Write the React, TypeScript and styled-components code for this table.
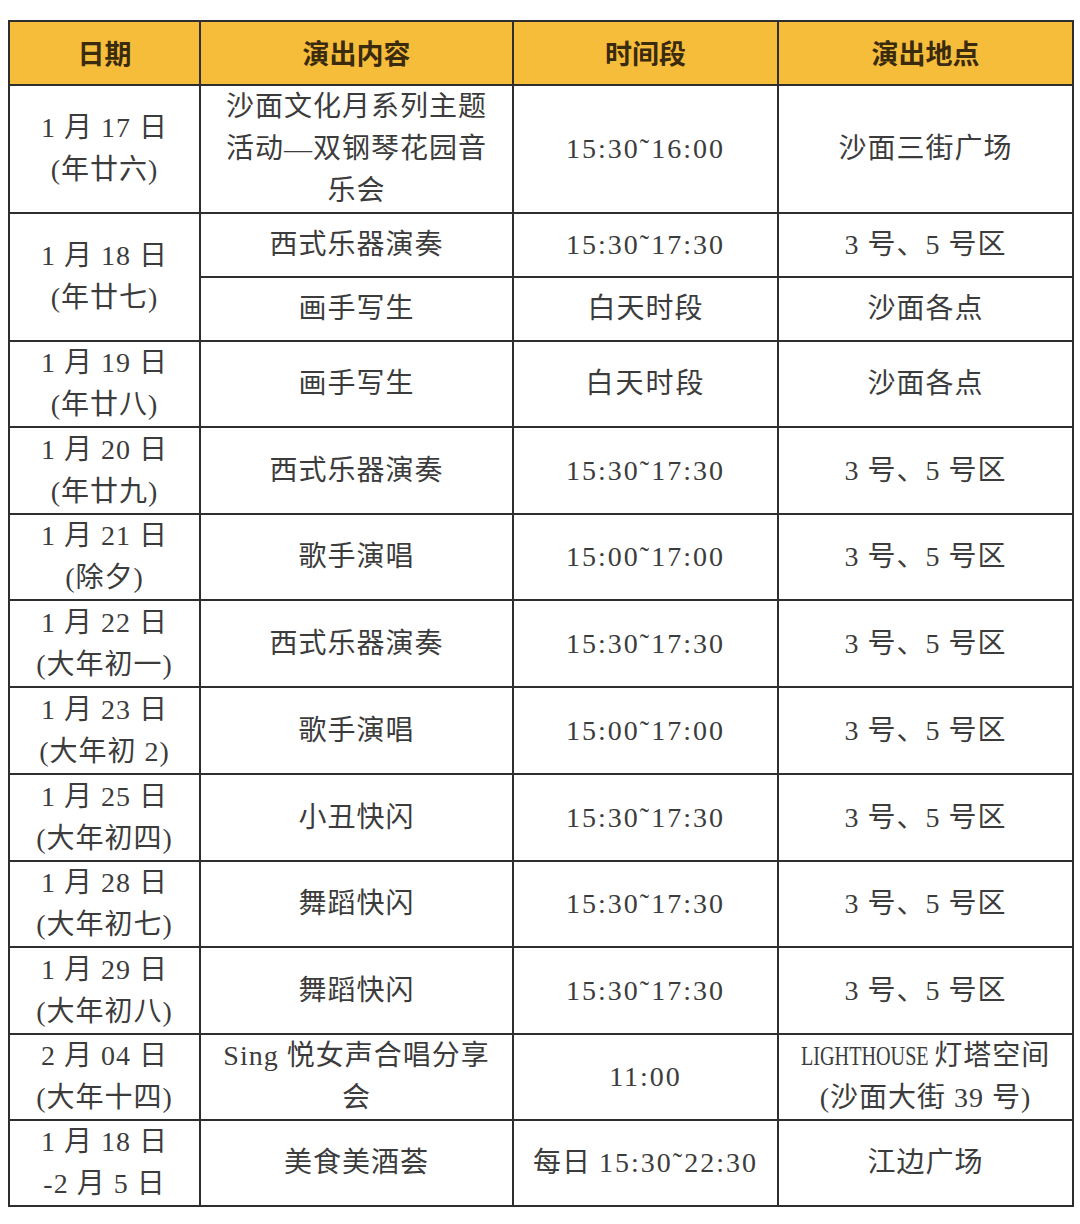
import React from 'react';
import styled, { createGlobalStyle } from 'styled-components';

const BORDER = '2px solid #2e2e2e';

const GlobalStyle = createGlobalStyle`
	html,
	body {
		margin: 0;
		padding: 0;
		background: #ffffff;
	}
	body {
		font-family: 'Liberation Serif', 'Noto Sans CJK SC', serif;
	}
`;

const Page = styled.div`
	width: 1080px;
	height: 1224px;
	padding: 20px 0 0 8px;
	box-sizing: border-box;
	background: #ffffff;
	overflow: hidden;
`;

const Table = styled.table`
	border-collapse: collapse;
	table-layout: fixed;
	width: 1064px;
	color: #3c3c3c;
	font-size: 28px;
`;

const HeadCell = styled.th`
	height: 62px;
	padding: 0;
	background: #f6bd3b;
	border: ${BORDER};
	color: #3a2a0e;
	font-family: 'Noto Sans CJK SC', sans-serif;
	font-weight: 700;
	font-size: 27px;
	line-height: 30px;
	text-align: center;
	vertical-align: middle;
`;

const Row = styled.tr<{ $h: number }>`
	height: ${p => p.$h}px;
`;

const Cell = styled.td`
	padding: 0;
	border: ${BORDER};
	text-align: center;
	vertical-align: middle;
	line-height: 42px;
	letter-spacing: 1px;
	font-weight: 400;
	white-space: nowrap;
	overflow: hidden;
`;

const Time = styled.span`
	letter-spacing: 2px;
`;

// the latin name is set in a narrow face in the source
const Narrow = styled.span`
	display: inline-block;
	transform: scaleX(0.72);
	transform-origin: left center;
	margin-right: -52px;
	letter-spacing: 0;
`;

type Entry = {
	date: [string, string];
	show: string;
	time: string;
	place: string;
	h: number;
};

const rows: Entry[] = [
	{ date: ['1 月 19 日', '(年廿八)'], show: '画手写生', time: '白天时段', place: '沙面各点', h: 86 },
	{ date: ['1 月 20 日', '(年廿九)'], show: '西式乐器演奏', time: '15:30˜17:30', place: '3 号、5 号区', h: 87 },
	{ date: ['1 月 21 日', '(除夕)'], show: '歌手演唱', time: '15:00˜17:00', place: '3 号、5 号区', h: 86 },
	{ date: ['1 月 22 日', '(大年初一)'], show: '西式乐器演奏', time: '15:30˜17:30', place: '3 号、5 号区', h: 87 },
	{ date: ['1 月 23 日', '(大年初 2)'], show: '歌手演唱', time: '15:00˜17:00', place: '3 号、5 号区', h: 87 },
	{ date: ['1 月 25 日', '(大年初四)'], show: '小丑快闪', time: '15:30˜17:30', place: '3 号、5 号区', h: 87 },
	{ date: ['1 月 28 日', '(大年初七)'], show: '舞蹈快闪', time: '15:30˜17:30', place: '3 号、5 号区', h: 86 },
	{ date: ['1 月 29 日', '(大年初八)'], show: '舞蹈快闪', time: '15:30˜17:30', place: '3 号、5 号区', h: 87 },
];

export default function App() {
	return (
		<Page>
			<GlobalStyle />
			<Table>
				<colgroup>
					<col style={{ width: 191 }} />
					<col style={{ width: 313 }} />
					<col style={{ width: 265 }} />
					<col style={{ width: 295 }} />
				</colgroup>
				<thead>
					<tr>
						<HeadCell>日期</HeadCell>
						<HeadCell>演出内容</HeadCell>
						<HeadCell>时间段</HeadCell>
						<HeadCell>演出地点</HeadCell>
					</tr>
				</thead>
				<tbody>
					<Row $h={128}>
						<Cell>
							1 月 17 日
							<br />
							(年廿六)
						</Cell>
						<Cell>
							沙面文化月系列主题
							<br />
							活动—双钢琴花园音
							<br />
							乐会
						</Cell>
						<Cell>
							<Time>15:30˜16:00</Time>
						</Cell>
						<Cell>沙面三街广场</Cell>
					</Row>
					<Row $h={64}>
						<Cell rowSpan={2}>
							1 月 18 日
							<br />
							(年廿七)
						</Cell>
						<Cell>西式乐器演奏</Cell>
						<Cell>
							<Time>15:30˜17:30</Time>
						</Cell>
						<Cell>3 号、5 号区</Cell>
					</Row>
					<Row $h={64}>
						<Cell>画手写生</Cell>
						<Cell>白天时段</Cell>
						<Cell>沙面各点</Cell>
					</Row>
					{rows.map((r, i) => (
						<Row key={i} $h={r.h}>
							<Cell>
								{r.date[0]}
								<br />
								{r.date[1]}
							</Cell>
							<Cell>{r.show}</Cell>
							<Cell>
								<Time>{r.time}</Time>
							</Cell>
							<Cell>{r.place}</Cell>
						</Row>
					))}
					<Row $h={86}>
						<Cell>
							2 月 04 日
							<br />
							(大年十四)
						</Cell>
						<Cell>
							Sing 悦女声合唱分享
							<br />
							会
						</Cell>
						<Cell>
							<Time>11:00</Time>
						</Cell>
						<Cell>
							<Narrow>LIGHTHOUSE</Narrow> 灯塔空间
							<br />
							(沙面大街 39 号)
						</Cell>
					</Row>
					<Row $h={86}>
						<Cell>
							1 月 18 日
							<br />
							-2 月 5 日
						</Cell>
						<Cell>美食美酒荟</Cell>
						<Cell>
							每日 <Time>15:30˜22:30</Time>
						</Cell>
						<Cell>江边广场</Cell>
					</Row>
				</tbody>
			</Table>
		</Page>
	);
}
